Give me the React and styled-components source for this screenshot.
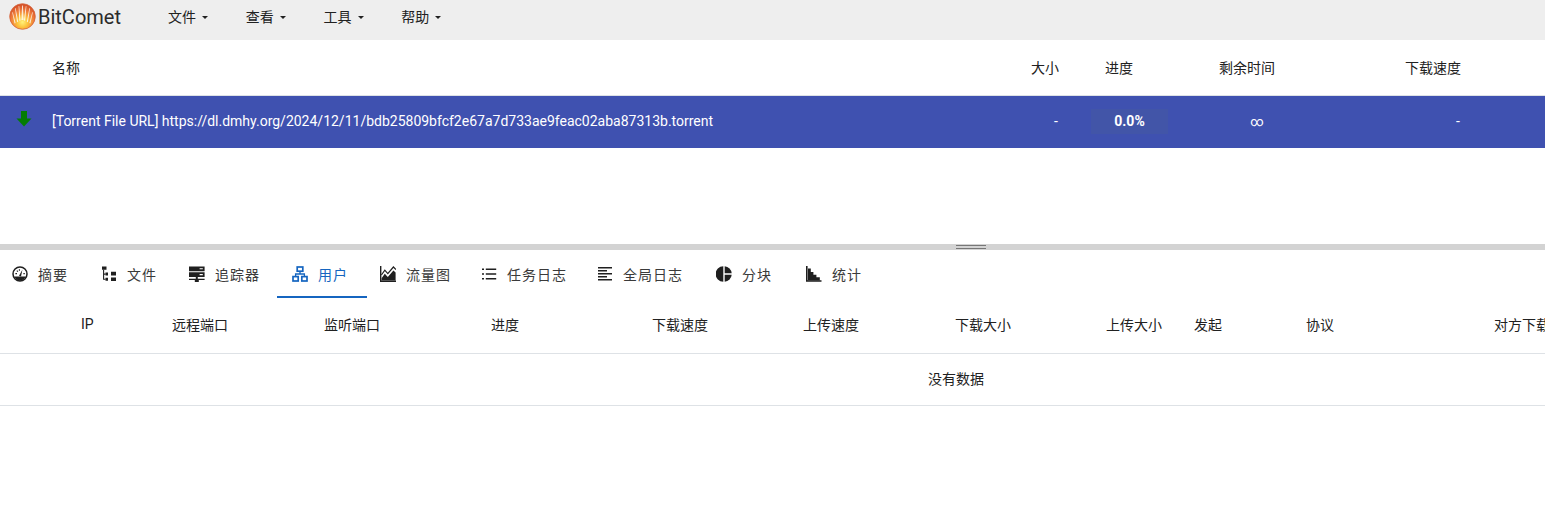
import styled, { createGlobalStyle } from 'styled-components';

const GlobalStyle = createGlobalStyle`
  html, body {
    margin: 0;
    padding: 0;
    background: #fff;
    overflow: hidden;
  }
  body {
    font-family: Roboto, "Noto Sans CJK SC", sans-serif;
    font-size: 14px;
    color: #212121;
  }
`;

const Logo = () => (
  <svg width="27" height="27" viewBox="0 0 27 27">
    <defs>
      <radialGradient id="ball" cx="50%" cy="72%" r="66%">
        <stop offset="0%" stopColor="#fff27a" />
        <stop offset="32%" stopColor="#fcc23c" />
        <stop offset="68%" stopColor="#ef7d3a" />
        <stop offset="100%" stopColor="#d6532a" />
      </radialGradient>
    </defs>
    <circle cx="13.5" cy="13.5" r="12.8" fill="url(#ball)" stroke="#d4623a" strokeWidth="0.8" />
    <g fill="#fff" opacity="0.8">
      <path d="M13.1 2.4h.8l.7 14.6h-2.2z" />
      <path d="M9.6 3h.6l1.4 14.4-1.3.4z" />
      <path d="M16.8 3h.6l-1.2 14.8-1.3-.4z" />
      <path d="M6 5.6l.6-.5 2.6 13.6-1.1.5z" />
      <path d="M21 5.6l-.6-.5-2.6 13.6 1.1.5z" />
      <path d="M3.2 9.6l.5-.7 2.9 11-1 .5z" />
      <path d="M23.8 9.6l-.5-.7-2.9 11 1 .5z" />
    </g>
  </svg>
);

const ArrowDown = () => (
  <svg width="16" height="16" viewBox="0 0 16 16">
    <path d="M5 0h6v7.5h4.5L8 15.5.5 7.5H5z" fill="#047c04" />
  </svg>
);

const GaugeIcon = () => (
  <svg width="16" height="16" viewBox="0 0 16 16">
    <circle cx="8" cy="8" r="7" fill="none" stroke="currentColor" strokeWidth="1.5" />
    <path d="M2.4 10.6h11.2A6.6 6.6 0 0 1 8 14.8a6.6 6.6 0 0 1-5.6-4.2z" fill="currentColor" />
    <path d="M7 9.8 10.4 3.8 9 10.4z" fill="currentColor" />
    <path d="M3.4 7.6h1.6M7.4 3.2v1.6M4.8 4.6l1.1 1.1M11.4 7.6h1.4" stroke="currentColor" strokeWidth="1.1" />
  </svg>
);

const TreeIcon = () => (
  <svg width="16" height="16" viewBox="0 0 16 16">
    <path d="M1 .5h4.5v3.2H1zM4.5 6.6H7v3H4.5zM4.5 11.8H7v3H4.5zM10 5.8h5v3.8h-5zM10 11.4h5v3.6h-5z" fill="currentColor" />
    <path d="M2.6 3.7v9.6h2M2.6 8.1h2" fill="none" stroke="currentColor" strokeWidth="1.1" />
  </svg>
);

const ServerIcon = () => (
  <svg width="16" height="16" viewBox="0 0 16 16">
    <path d="M0 .4h15.6v4.8H0zM0 6.2h15.6V11H0z" fill="currentColor" />
    <path d="M6.8 11h2v1.7h6.8v1.4H9.8V16H5.8v-1.9H0v-1.4h6.8z" fill="currentColor" />
    <path d="M10.6 2.8h3.2M10.6 8.6h3.2" stroke="#fff" strokeWidth="1.1" />
  </svg>
);

const SitemapIcon = () => (
  <svg width="16" height="16" viewBox="0 0 16 16" fill="none" stroke="currentColor" strokeWidth="1.7">
    <rect x="5.2" y="1" width="5.6" height="4.2" />
    <rect x="1" y="10.6" width="5.2" height="4.4" />
    <rect x="9.8" y="10.6" width="5.2" height="4.4" />
    <path d="M8 5.2V8M3.6 10.6V8h8.8v2.6" strokeWidth="1.3" />
  </svg>
);

const AreaIcon = () => (
  <svg width="16" height="16" viewBox="0 0 16 16">
    <path d="M.7 0v15.3H16" fill="none" stroke="currentColor" strokeWidth="1.4" />
    <path d="M1.6 14.6v-2.4l3.2-4.4 3 3.2 5.6-6.6 2.2 2.2v8z" fill="currentColor" />
    <path d="M1.4 9 4.8 4.2l3 3.4L13.4 1 16 3.6" fill="none" stroke="currentColor" strokeWidth="1.2" />
  </svg>
);

const ListIcon = () => (
  <svg width="16" height="16" viewBox="0 0 16 16">
    <path d="M1 2.4h2V4H1zM1 7.2h2v1.6H1zM1 12h2v1.6H1z" fill="currentColor" />
    <path d="M4.8 3.2h10.4M4.8 8h10.4M4.8 12.8h10.4" stroke="currentColor" strokeWidth="1.4" />
  </svg>
);

const AlignIcon = () => (
  <svg width="16" height="16" viewBox="0 0 16 16">
    <path d="M1 1.8h14M1 4.8h9M1 7.8h14M1 10.8h9M1 13.8h14" stroke="currentColor" strokeWidth="1.6" />
  </svg>
);

const PieIcon = () => (
  <svg width="16" height="16" viewBox="0 0 16 16">
    <path d="M7.3.3v15.4A7.7 7.7 0 0 1 7.3.3z" fill="currentColor" />
    <path d="M8.7.3A7.7 7.7 0 0 1 15.7 7.3H8.7z" fill="currentColor" />
    <path d="M8.7 8.7h7A7.7 7.7 0 0 1 8.7 15.7z" fill="currentColor" />
  </svg>
);

const BarsIcon = () => (
  <svg width="16" height="16" viewBox="0 0 16 16">
    <path d="M.8 0v15h14.7" fill="none" stroke="currentColor" strokeWidth="1.6" />
    <path d="M2 14.4V2.5h2.8v3.6h2.6v2.6h3v2.6h3.4v3.1z" fill="currentColor" />
  </svg>
);

const tabs = [
  { label: '摘要', icon: GaugeIcon, pad: 16 },
  { label: '文件', icon: TreeIcon, pad: 15 },
  { label: '追踪器', icon: ServerIcon, pad: 14 },
  { label: '用户', icon: SitemapIcon, pad: 15, active: true },
  { label: '流量图', icon: AreaIcon, pad: 13 },
  { label: '任务日志', icon: ListIcon, pad: 13 },
  { label: '全局日志', icon: AlignIcon, pad: 14 },
  { label: '分块', icon: PieIcon, pad: 17 },
  { label: '统计', icon: BarsIcon, pad: 16 },
];

const peerColumns = ['IP', '远程端口', '监听端口', '进度', '下载速度', '上传速度', '下载大小', '上传大小', '发起', '协议', '对方下载'];

export default function App() {
  return (
    <Page>
      <GlobalStyle />
      <NavBar>
        <Brand>
          <Logo />
          <BrandName>BitComet</BrandName>
        </Brand>
        <Menu>
          {['文件', '查看', '工具', '帮助'].map(item => (
            <MenuItem key={item}>
              {item}
              <Caret />
            </MenuItem>
          ))}
        </Menu>
      </NavBar>

      <TaskPane>
        <TaskHead>
          <span />
          <span>名称</span>
          <span>大小</span>
          <span>进度</span>
          <span>剩余时间</span>
          <span>下载速度</span>
        </TaskHead>
        <TaskRow>
          <RowIcon><ArrowDown /></RowIcon>
          <TaskName>[Torrent File URL] https://dl.dmhy.org/2024/12/11/bdb25809bfcf2e67a7d733ae9feac02aba87313b.torrent</TaskName>
          <Cell>-</Cell>
          <ProgressCell>0.0%</ProgressCell>
          <InfinityCell>∞</InfinityCell>
          <Cell>-</Cell>
        </TaskRow>
      </TaskPane>

      <Splitter>
        <Grip />
      </Splitter>

      <TabStrip>
        {tabs.map(({ label, icon: Icon, pad, active }) => (
          <Tab key={label} $pad={pad} $active={active} $chars={label.length}>
            <TabIcon $active={active}><Icon /></TabIcon>
            {label}
          </Tab>
        ))}
      </TabStrip>

      <PeerTable>
        <PeerHead>
          {peerColumns.map(col => (
            <span key={col}>{col}</span>
          ))}
        </PeerHead>
        <EmptyRow>没有数据</EmptyRow>
      </PeerTable>
    </Page>
  );
}

const Page = styled.div`
  width: 1545px;
  height: 524px;
  overflow: hidden;
  background: #fff;
`;

const NavBar = styled.div`
  height: 40px;
  background: #eee;
  display: flex;
  align-items: flex-start;
`;

const Brand = styled.div`
  display: flex;
  align-items: center;
  gap: 2px;
  padding: 3px 0 0 9px;
  width: 168px;
  box-sizing: border-box;
`;

const BrandName = styled.span`
  font-size: 20px;
  line-height: 26px;
  color: #2b2b2b;
`;

const Menu = styled.div`
  display: flex;
  padding-top: 7px;
`;

const MenuItem = styled.div`
  display: flex;
  align-items: center;
  width: 77.75px;
  height: 20px;
  font-size: 14px;
  line-height: 20px;
  color: #212121;
`;

const Caret = styled.i`
  width: 0;
  height: 0;
  margin-left: 6px;
  border-top: 3px solid #212121;
  border-left: 3px solid transparent;
  border-right: 3px solid transparent;
`;

const TaskPane = styled.div`
  height: 204px;
`;

const TaskHead = styled.div`
  height: 53px;
  padding-bottom: 2px;
  display: grid;
  grid-template-columns: 52px 979px 74px 114px 186px 1fr;
  align-items: center;
  border-bottom: 1px solid #dee2e6;
  font-size: 14px;
  color: #212121;
`;

const TaskRow = styled.div`
  height: 50px;
  padding-bottom: 2px;
  display: grid;
  grid-template-columns: 52px 969px 70px 77px 178px 224px;
  align-items: center;
  background: #3f51b0;
  color: #fff;
  font-size: 14px;
`;

const RowIcon = styled.div`
  display: flex;
  padding: 0 0 4px 16px;
`;

const TaskName = styled.div`
  white-space: nowrap;
`;

const Cell = styled.div`
  text-align: center;
`;

const InfinityCell = styled(Cell)`
  font-size: 13px;
`;

const ProgressCell = styled.div`
  height: 25px;
  line-height: 25px;
  text-align: center;
  font-weight: 700;
  background: #4255a8;
`;

const Splitter = styled.div`
  position: relative;
  height: 6px;
  background: #d3d3d3;
`;

const Grip = styled.div`
  position: absolute;
  left: 956px;
  top: 1px;
  width: 30px;
  height: 2px;
  border-top: 1px solid #777;
  border-bottom: 1px solid #777;
`;

const TabStrip = styled.div`
  display: flex;
  height: 48px;
  margin-left: -4px;
`;

const Tab = styled.div`
  display: flex;
  align-items: center;
  box-sizing: border-box;
  height: 48px;
  padding: 2px ${p => (p.$active ? 21 : 20) - p.$chars}px 0 ${p => p.$pad}px;
  border-bottom: 2px solid ${p => (p.$active ? '#1565c0' : 'transparent')};
  font-size: 14px;
  letter-spacing: 1px;
  white-space: nowrap;
  color: ${p => (p.$active ? '#1565c0' : '#3a3a3a')};
`;

const TabIcon = styled.span`
  display: flex;
  width: 16px;
  margin-right: 10px;
  color: ${p => (p.$active ? '#1565c0' : '#1f1f1f')};
`;

const PeerTable = styled.div`
  width: 1912px;
`;

const PeerHead = styled.div`
  height: 51px;
  padding-bottom: 4px;
  display: grid;
  grid-template-columns: 91px 152px 167px 161px 151px 152px 151px 88px 112px 188px 200px;
  align-items: center;
  padding-left: 81px;
  border-bottom: 1px solid #dee2e6;
  font-size: 14px;
  color: #212121;
  span {
    white-space: nowrap;
  }
`;

const EmptyRow = styled.div`
  height: 51px;
  line-height: 51px;
  text-align: center;
  border-bottom: 1px solid #dee2e6;
  font-size: 14px;
  color: #212121;
`;
